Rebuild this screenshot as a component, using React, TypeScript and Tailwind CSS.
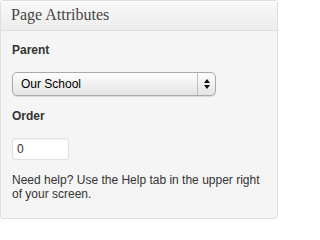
import React from 'react';

const sans = { fontFamily: '"Liberation Sans", Arial, sans-serif' };

export default function App() {
  return (
    <div className="w-[280px] h-[219px] bg-white" style={sans}>
      <div className="w-[278px] h-[219px] flex flex-col border border-[#dfdfdf] rounded-[3px] bg-[#f5f5f5] overflow-hidden">
        <div className="h-[30px] shrink-0 px-[10px] pt-[6px] border-b border-[#dfdfdf] bg-gradient-to-b from-[#f9f9f9] to-[#ececec] shadow-[inset_0_1px_0_#fff]">
          <h3
            className="text-[16px] leading-[16px] text-[#464646]"
            style={{ fontFamily: '"Liberation Serif", "Times New Roman", serif' }}
          >
            Page Attributes
          </h3>
        </div>
        <div className="flex flex-col px-[11px] pt-[12px] text-[12px] text-[#333]">
          <p className="font-bold leading-[15px]">Parent</p>
          <div className="mt-[14px] w-[204px] h-[24px] flex items-stretch rounded-[5px] border border-[#a9a9a9] bg-gradient-to-b from-[#fdfdfd] to-[#e4e4e4] shadow-[0_1px_1px_rgba(0,0,0,0.12)]">
            <span className="flex-1 flex items-center pl-[8px] text-[12px] text-black">Our School</span>
            <span className="w-[18px] flex flex-col items-center justify-center gap-[2px] border-l border-[#bdbdbd]">
              <svg width="6" height="4" viewBox="0 0 6 4"><path d="M3 0L6 4H0z" fill="#111" /></svg>
              <svg width="6" height="4" viewBox="0 0 6 4"><path d="M0 0h6L3 4z" fill="#111" /></svg>
            </span>
          </div>
          <p className="mt-[13px] font-bold leading-[15px]">Order</p>
          <div className="mt-[14px] w-[57px] h-[22px] flex items-center pl-[4px] rounded-[3px] border border-[#dfdfdf] bg-white shadow-[inset_0_1px_1px_rgba(0,0,0,0.04)] text-[12px] text-[#333]">
            0
          </div>
          <p className="mt-[13px] leading-[14px]">
            Need help? Use the Help tab in the upper right of your screen.
          </p>
        </div>
      </div>
    </div>
  );
}
